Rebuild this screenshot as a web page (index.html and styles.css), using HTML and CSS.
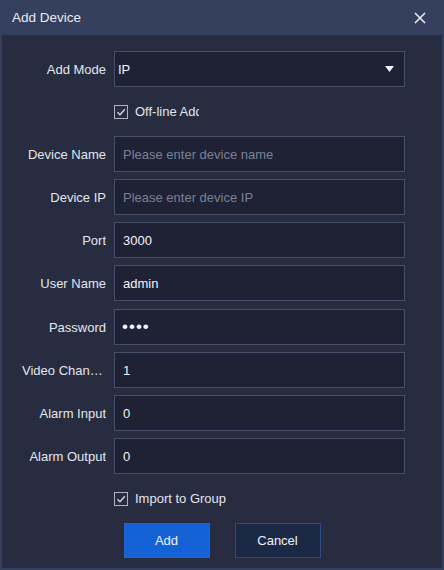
FILE: index.html
```html
<!DOCTYPE html>
<html>
<head>
<meta charset="utf-8">
<link rel="stylesheet" href="styles.css">
</head>
<body>
<div class="dialog">
  <div class="titlebar">
    <span class="title">Add Device</span>
    <svg class="close" width="12" height="12" viewBox="0 0 12 12"><path d="M1 1L11 11M11 1L1 11" stroke="#e8ebf3" stroke-width="1.6"/></svg>
  </div>
  <div class="content">
    <div class="row">
      <label class="lbl">Add Mode</label>
      <div class="field select"><span>IP</span><svg width="9" height="6" viewBox="0 0 9 6"><path d="M0 0H9L4.5 6Z" fill="#f0f2f7"/></svg></div>
    </div>
    <div class="row check-row">
      <span></span>
      <div class="check"><span class="box"><svg width="12" height="12" viewBox="0 0 12 12"><path d="M2.5 6.2L5 8.7L9.8 3.2" fill="none" stroke="#d8dce6" stroke-width="1.3"/></svg></span><span class="clip">Off-line Add</span></div>
    </div>
    <div class="row"><label class="lbl">Device Name</label><input class="field" placeholder="Please enter device name"></div>
    <div class="row"><label class="lbl">Device IP</label><input class="field" placeholder="Please enter device IP"></div>
    <div class="row"><label class="lbl">Port</label><input class="field" value="3000"></div>
    <div class="row row-wide"><label class="lbl">User Name</label><input class="field" value="admin"></div>
    <div class="row"><label class="lbl">Password</label><input class="field pwd" type="password" value="1234"></div>
    <div class="row"><label class="lbl">Video Channel</label><input class="field" value="1"></div>
    <div class="row"><label class="lbl">Alarm Input</label><input class="field" value="0"></div>
    <div class="row"><label class="lbl">Alarm Output</label><input class="field" value="0"></div>
    <div class="row check-row">
      <span></span>
      <div class="check"><span class="box"><svg width="12" height="12" viewBox="0 0 12 12"><path d="M2.5 6.2L5 8.7L9.8 3.2" fill="none" stroke="#d8dce6" stroke-width="1.3"/></svg></span><span>Import to Group</span></div>
    </div>
    <div class="buttons">
      <button class="btn primary">Add</button>
      <button class="btn secondary">Cancel</button>
    </div>
  </div>
</div>
</body>
</html>
```
FILE: styles.css
```css
* { box-sizing: border-box; }
html, body { margin: 0; padding: 0; }
body {
  width: 444px;
  height: 570px;
  font-family: "Liberation Sans", Arial, sans-serif;
  font-size: 13px;
  background: #35405f;
}
.dialog {
  width: 444px;
  height: 570px;
  display: flex;
  flex-direction: column;
  background: #35405f;
}
.titlebar {
  height: 35px;
  display: flex;
  align-items: center;
  justify-content: space-between;
  padding: 0 18px 0 12px;
  color: #e8ebf3;
  background: #35405f;
}
.title { font-size: 13.5px; }
.close { display: block; }
.content {
  flex: 1;
  margin: 0 2px 2px 2px;
  background: #272c40;
  padding: 16px 0 0 20px;
}
.row {
  display: grid;
  grid-template-columns: 84px 291px;
  column-gap: 8px;
  align-items: center;
  margin-bottom: 7px;
}
.row-wide { margin-bottom: 8px; }
.lbl {
  color: #e3e6ee;
  text-align: right;
  white-space: nowrap;
  overflow: hidden;
  text-overflow: ellipsis;
}
.field {
  height: 36px;
  width: 291px;
  background: #1e2234;
  border: 1px solid #464f6c;
  color: #f2f4f8;
  font-family: "Liberation Sans", Arial, sans-serif;
  font-size: 13px;
  padding: 0 8px;
  outline: none;
  margin: 0;
}
.field::placeholder { color: #7a8196; }
.pwd {
  font-size: 17px;
  letter-spacing: 1px;
  padding-left: 7px;
}
.select {
  display: flex;
  align-items: center;
  justify-content: space-between;
  padding: 0 10px 0 3px;
}
.check-row { height: 35px; }
.check {
  display: flex;
  align-items: center;
  color: #e3e6ee;
}
.box {
  width: 14px;
  height: 14px;
  border: 1px solid #aeb3c2;
  display: flex;
  align-items: center;
  justify-content: center;
  margin-right: 7px;
}
.box svg { display: block; }
.clip {
  width: 64px;
  overflow: hidden;
  white-space: nowrap;
}
.buttons {
  display: flex;
  justify-content: center;
  gap: 25px;
  margin-top: 0;
  padding-right: 20px;
}
.btn {
  width: 86px;
  height: 35px;
  font-family: "Liberation Sans", Arial, sans-serif;
  font-size: 13px;
  color: #eef2fb;
  border-radius: 0;
  margin: 0;
}
.primary {
  background: #1561d6;
  border: 1px solid #1a66dc;
}
.secondary {
  background: #1b2947;
  border: 1px solid #2d4a85;
}
```
